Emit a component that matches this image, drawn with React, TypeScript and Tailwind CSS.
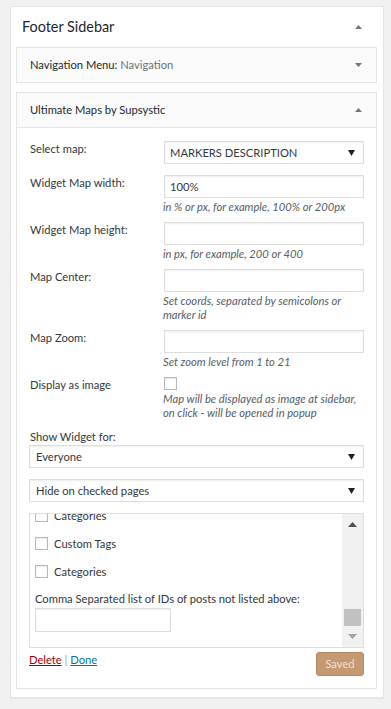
import React from "react";

function TriUp({ color = "#72777c", w = 7, h = 4 }: { color?: string; w?: number; h?: number }) {
  return (
    <svg width={w} height={h} viewBox={`0 0 ${w} ${h}`} className="block shrink-0">
      <polygon points={`0,${h} ${w / 2},0 ${w},${h}`} fill={color} />
    </svg>
  );
}

function TriDown({ color = "#72777c", w = 7, h = 4 }: { color?: string; w?: number; h?: number }) {
  return (
    <svg width={w} height={h} viewBox={`0 0 ${w} ${h}`} className="block shrink-0">
      <polygon points={`0,0 ${w},0 ${w / 2},${h}`} fill={color} />
    </svg>
  );
}

function SelectBox({ text, className = "" }: { text: string; className?: string }) {
  return (
    <div
      className={
        "flex h-[23px] items-center justify-between border border-[#dddddd] bg-white pr-[8px] shadow-[inset_0_1px_2px_rgba(0,0,0,0.07)] " +
        className
      }
    >
      <span className="text-[11.2px] leading-[16px] text-[#32373c]">{text}</span>
      <TriDown color="#222222" w={7} h={6} />
    </div>
  );
}

function Input({ value = "", className = "" }: { value?: string; className?: string }) {
  return (
    <div
      className={
        "flex h-[23px] items-center border border-[#dddddd] bg-white pl-[5px] shadow-[inset_0_1px_2px_rgba(0,0,0,0.07)] " +
        className
      }
    >
      <span className="text-[11.2px] leading-[16px] text-[#32373c]">{value}</span>
    </div>
  );
}

function Hint({ children }: { children: React.ReactNode }) {
  return (
    <div className="mt-[2px] ml-[-1px] whitespace-nowrap text-[11.2px] italic leading-[14px] text-[#555d66]">
      {children}
    </div>
  );
}

function Row({ label, className = "", children }: { label: string; className?: string; children: React.ReactNode }) {
  return (
    <div className={"flex " + className}>
      <div className="w-[134px] shrink-0 text-[11.2px] leading-[16px] text-[#32373c]">{label}</div>
      <div className="w-[200px] shrink-0">{children}</div>
    </div>
  );
}

function Check({ label, className = "" }: { label: string; className?: string }) {
  return (
    <div className={"flex h-[13px] items-center gap-[6px] " + className}>
      <div className="h-[13px] w-[13px] shrink-0 border border-[#b4b9be] bg-white shadow-[inset_0_1px_2px_rgba(0,0,0,0.1)]" />
      <span className="text-[11.2px] leading-[16px] text-[#32373c]">{label}</span>
    </div>
  );
}

export default function App() {
  return (
    <div className="min-h-[709px] bg-[#f1f1f1] pl-[10px] pt-[6px] font-['Lato',sans-serif]">
      <div className="w-[374px] border border-[#e5e5e5] bg-white pb-[8px] pl-[5px] pr-[6px] shadow-[0_1px_1px_rgba(0,0,0,0.04)]">
        <div className="flex h-[40px] items-center justify-between pl-[6px] pr-[15px]">
          <h2 className="text-[14.4px] leading-[20px] text-[#23282d]">Footer Sidebar</h2>
          <TriUp />
        </div>

        <div className="flex h-[36px] items-center justify-between border border-[#e5e5e5] bg-[#fafafa] pl-[13px] pr-[14px]">
          <h3 className="text-[11.2px] leading-[16px] text-[#23282d]">
            Navigation Menu: <span className="text-[#6b7178]">Navigation</span>
          </h3>
          <TriDown />
        </div>

        <div className="mt-[9px] border border-[#e5e5e5] bg-white">
          <div className="flex h-[35px] items-center justify-between border-b border-[#e5e5e5] bg-[#fafafa] pl-[13px] pr-[14px]">
            <h3 className="text-[11.2px] leading-[16px] text-[#23282d]">Ultimate Maps by Supsystic</h3>
            <TriUp />
          </div>

          <div className="pb-[12px] pl-[13px] pr-[12px] pt-[13px]">
            <Row label="Select map:">
              <SelectBox text="MARKERS DESCRIPTION" className="pl-[5px]" />
            </Row>

            <Row label="Widget Map width:" className="mt-[11px]">
              <Input value="100%" />
              <Hint>in % or px, for example, 100% or 200px</Hint>
            </Row>

            <Row label="Widget Map height:" className="mt-[8px]">
              <Input />
              <Hint>in px, for example, 200 or 400</Hint>
            </Row>

            <Row label="Map Center:" className="mt-[8px]">
              <Input />
              <Hint>
                Set coords, separated by semicolons or
                <br />
                marker id
              </Hint>
            </Row>

            <Row label="Map Zoom:" className="mt-[8px]">
              <Input />
              <Hint>Set zoom level from 1 to 21</Hint>
            </Row>

            <Row label="Display as image" className="mt-[8px]">
              <div className="h-[13px] w-[13px] border border-[#b4b9be] bg-white shadow-[inset_0_1px_2px_rgba(0,0,0,0.1)]" />
              <Hint>
                Map will be displayed as image at sidebar,
                <br />
                on click - will be opened in popup
              </Hint>
            </Row>

            <div className="mt-[9px] text-[11.2px] leading-[16px] text-[#32373c]">Show Widget for:</div>
            <SelectBox text="Everyone" className="ml-[-1px] w-[335px] pl-[6px]" />

            <SelectBox text="Hide on checked pages" className="ml-[-1px] mt-[11px] w-[335px] pl-[6px]" />

            <div className="ml-[-1px] mt-[11px] flex h-[135px] w-[335px] border border-[#dddddd] bg-white">
              <div className="min-w-0 flex-1 overflow-hidden pl-[5px]">
                <div className="mt-[-5px]">
                  <Check label="Categories" />
                  <Check label="Custom Tags" className="mt-[15px]" />
                  <Check label="Categories" className="mt-[15px]" />
                  <div className="mt-[13px] whitespace-nowrap text-[11.2px] leading-[16px] text-[#32373c]">
                    Comma Separated list of IDs of posts not listed above:
                  </div>
                  <div className="mt-[1px] h-[24px] w-[136px] border border-[#dddddd] bg-white shadow-[inset_0_1px_2px_rgba(0,0,0,0.07)]" />
                </div>
              </div>
              <div className="flex w-[21px] shrink-0 flex-col justify-between bg-[#f1f1f1] pb-[2px]">
                <div className="flex h-[20px] items-center justify-center">
                  <TriUp color="#505050" w={9} h={5} />
                </div>
                <div>
                  <div className="mx-[2px] mb-[2px] h-[17px] bg-[#c1c1c1]" />
                  <div className="flex h-[17px] items-center justify-center">
                    <TriDown color="#a3a3a3" w={9} h={5} />
                  </div>
                </div>
              </div>
            </div>

            <div className="ml-[-1px] mt-[4px] flex w-[335px] items-start justify-between">
              <div className="text-[11.2px] leading-[16px]">
                <a className="text-[#a00000] underline">Delete</a>
                <span className="text-[#a0a5aa]"> | </span>
                <a className="text-[#0073aa] underline">Done</a>
              </div>
              <button className="flex h-[24px] w-[48px] items-center justify-center rounded-[3px] border border-[#b28960] bg-[#c59a72] text-[11.2px] leading-[16px] text-[#eedfd1]">
                Saved
              </button>
            </div>
          </div>
        </div>
      </div>
    </div>
  );
}
